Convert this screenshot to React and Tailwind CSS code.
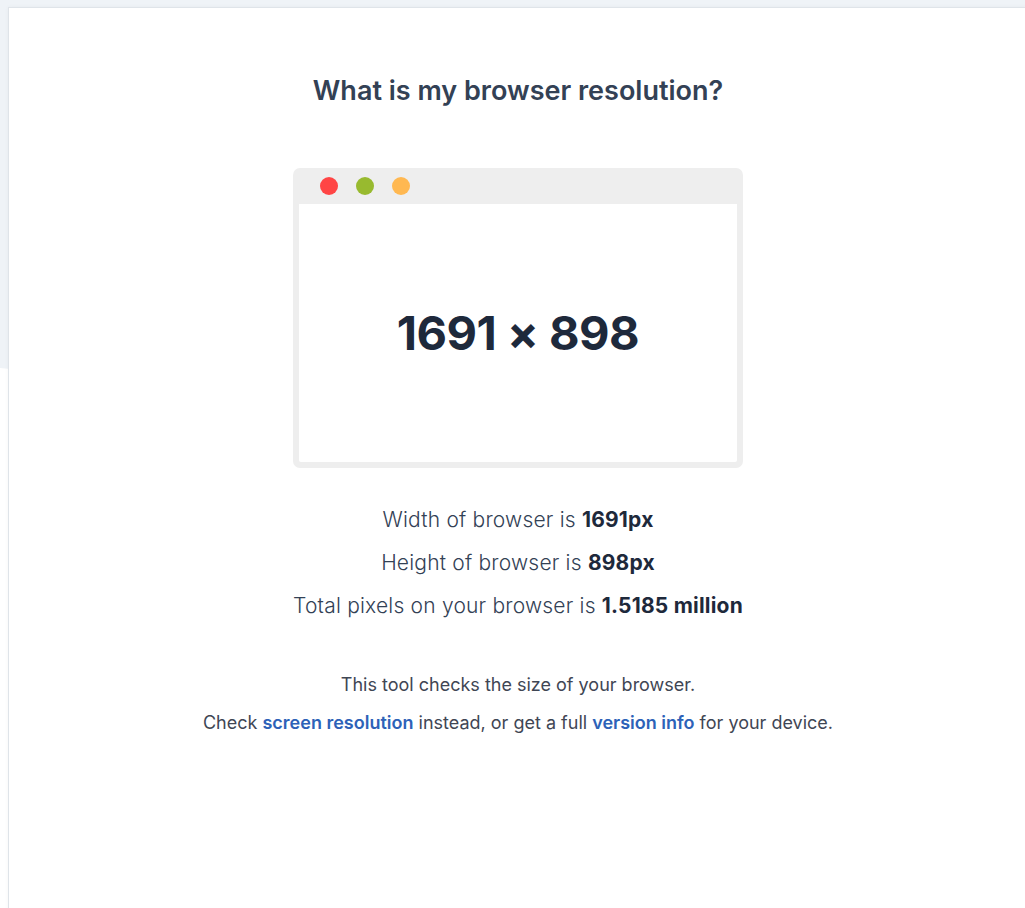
export default function App() {
  return (
    <div className="relative w-[1025px] h-[908px] overflow-hidden bg-[#eff3f7]" style={{ fontFamily: "Inter, 'Noto Sans', sans-serif" }}>
      <div className="absolute left-0 top-[368px] w-[40px] h-[600px] bg-white rounded-tr-[40px]" />
      <div className="relative ml-[8px] mt-[7px] w-[1020px] h-[920px] bg-white border border-[#dfe4e9] shadow-[0_0_4px_rgba(0,0,0,0.04)] flex flex-col items-center">
        <h1 className="mt-[66px] text-[27px] leading-[34px] font-semibold text-[#334155]">What is my browser resolution?</h1>
        <div className="mt-[60px] w-[450px] h-[300px] rounded-[7px] bg-[#eeeeee] flex flex-col px-[6px] pb-[6px]">
          <div className="h-[36px] flex items-center gap-[18px] pl-[21px]">
            <span className="w-[18px] h-[18px] rounded-full bg-[#ff4545]" />
            <span className="w-[18px] h-[18px] rounded-full bg-[#98ba2f]" />
            <span className="w-[18px] h-[18px] rounded-full bg-[#ffb851]" />
          </div>
          <div className="flex-1 bg-white rounded-b-[2px] flex items-center justify-center">
            <span className="text-[47px] font-bold text-[#1e293b] tracking-[-0.5px] mt-[1px]">1691 × 898</span>
          </div>
        </div>
        <div className="mt-[38px] flex flex-col items-center gap-[15px] text-[21px] leading-[28px] tracking-[0.2px] font-light text-[#334155]">
          <p>Width of browser is <b className="font-bold text-[#1e293b]">1691px</b></p>
          <p>Height of browser is <b className="font-bold text-[#1e293b]">898px</b></p>
          <p>Total pixels on your browser is <b className="font-bold text-[#1e293b]">1.5185 million</b></p>
        </div>
        <div className="mt-[52px] flex flex-col items-center gap-[12px] text-[18px] leading-[26px] font-normal text-[#3f4654]">
          <p>This tool checks the size of your browser.</p>
          <p>Check <a className="font-semibold text-[#2d62b8]">screen resolution</a> instead, or get a full <a className="font-semibold text-[#2d62b8]">version info</a> for your device.</p>
        </div>
      </div>
    </div>
  );
}
